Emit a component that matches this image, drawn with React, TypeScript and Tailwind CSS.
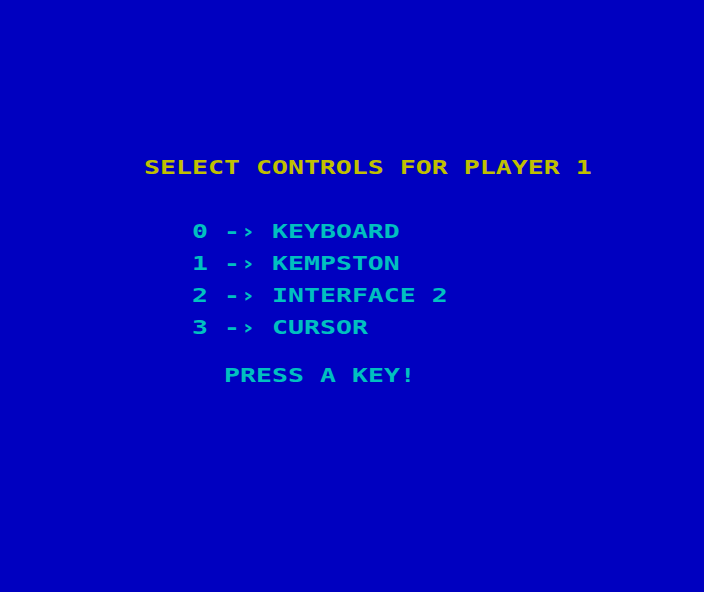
import React from "react";

const line =
  "block h-[16px] leading-[16px] whitespace-pre font-bold text-[19.2px] origin-left scale-x-[1.384]";

const options = [
  "0 -\u203A KEYBOARD",
  "1 -\u203A KEMPSTON",
  "2 -\u203A INTERFACE 2",
  "3 -\u203A CURSOR",
];

export default function App() {
  return (
    <div
      className="w-full h-[592px] bg-[#0000C0] flex flex-col pt-[160px] overflow-hidden"
      style={{ fontFamily: '"DejaVu Sans Mono", "Liberation Mono", monospace' }}
    >
      <div className="pl-[144px]">
        <span className={`${line} text-[#C0C000]`}>SELECT CONTROLS FOR PLAYER 1</span>
      </div>
      <div className="pl-[192px] mt-[48px] flex flex-col gap-[16px]">
        {options.map((o) => (
          <span key={o} className={`${line} text-[#00C0C0]`}>
            {o}
          </span>
        ))}
      </div>
      <div className="pl-[224px] mt-[32px]">
        <span className={`${line} text-[#00C0C0]`}>PRESS A KEY!</span>
      </div>
    </div>
  );
}
